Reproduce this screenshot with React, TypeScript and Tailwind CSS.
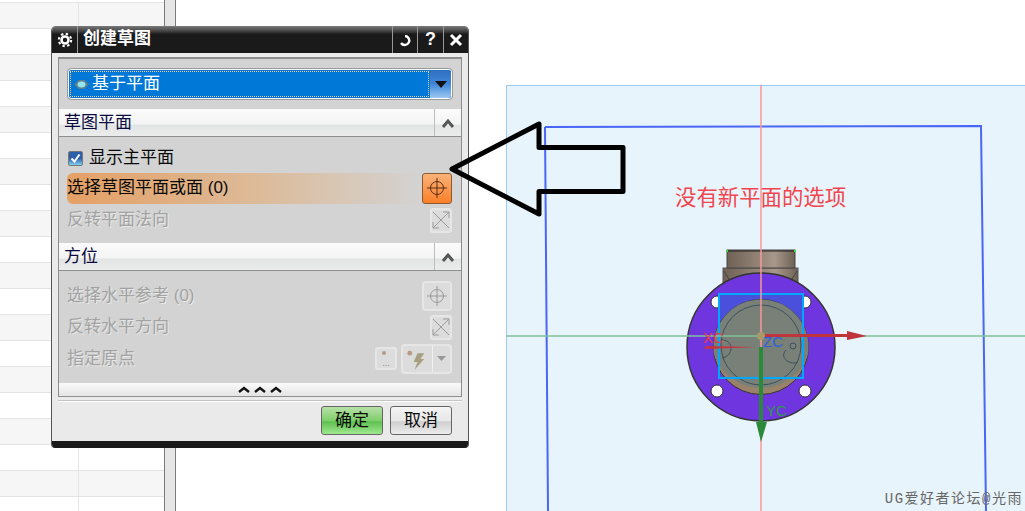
const cjk = "font-['Liberation_Sans','Noto_Sans_CJK_SC',sans-serif]";

function Crosshair({ color }: { color: string }) {
  return (
    <svg width="22" height="22" viewBox="0 0 22 22" fill="none" stroke={color} strokeWidth="1">
      <circle cx="11" cy="11" r="6.500" />
      <path d="M11 1v20M1 11h20" />
    </svg>
  );
}

function FlipIcon() {
  return (
    <div className="flex h-[25px] w-[22px] items-center justify-center rounded-[3px] border-2 border-[#e6e6e6] bg-[#dcdcdc]">
      <svg width="18" height="20" viewBox="0 0 18 20" fill="none" stroke="#9a9a9a" strokeWidth="1">
        <path d="M1 2l16 16M17 2L1 18M11 2h6v6M1 12v6h6" />
      </svg>
    </div>
  );
}

function SectionHeader({ title }: { title: string }) {
  return (
    <div className="flex h-[28px] border-b border-[#8e8e8e] bg-[linear-gradient(#fbfbfb_0%,#f4f4f4_55%,#e2e4e4_60%,#ececec_100%)]">
      <div className="flex-1 pl-[5px] text-[17px] leading-[27px] text-[#0a0a40]">{title}</div>
      <div className="flex w-[27px] items-center justify-center border-l border-[#bdbdbd]">
        <svg width="14" height="10" viewBox="0 0 14 10" fill="none" stroke="#555" strokeWidth="3">
          <path d="M2 9l5-6 5 6" />
        </svg>
      </div>
    </div>
  );
}

function Row({ text, height, children }: { text: string; height: string; children: React.ReactNode }) {
  return (
    <div className={`flex items-center justify-between pl-[8px] pr-[9px] ${height}`}>
      <span className="text-[17px] text-[#a2a2a2] [text-shadow:1px_1px_0_#e8e8e8]">{text}</span>
      {children}
    </div>
  );
}

function Dialog() {
  return (
    <div className={`absolute left-[51px] top-[26px] flex h-[422px] w-[418px] flex-col overflow-hidden rounded-t-[5px] rounded-b-[4px] border-x border-[#555] bg-[#eaeaea] ${cjk}`}>
      <div className="flex h-[27px] shrink-0 items-stretch bg-[linear-gradient(#7a7a7a_0%,#3a3a3a_22%,#1a1a1a_30%,#1a1a1a_100%)] text-white">
        <div className="flex w-[26px] items-center justify-center border-r border-[#999]">
          <svg width="16" height="16" viewBox="0 0 16 16" fill="none" stroke="#fff">
            <circle cx="8" cy="8" r="3.500" strokeWidth="2.600" />
            <circle cx="8" cy="8" r="6.200" strokeWidth="2" strokeDasharray="2.400 2.470" />
          </svg>
        </div>
        <div className="flex-1 pl-[5px] text-[17px] font-bold leading-[26px]">创建草图</div>
        <div className="flex w-[25px] items-center justify-center border-l border-[#999]">
          <svg width="14" height="14" viewBox="0 0 14 14" fill="none" stroke="#fff" strokeWidth="2.400">
            <path d="M7 3a4.500 4.500 0 1 1-4 7" />
          </svg>
        </div>
        <div className="flex w-[26px] items-center justify-center border-l border-[#999] text-[18px] font-bold">?</div>
        <div className="flex w-[25px] items-center justify-center border-l border-[#999]">
          <svg width="14" height="14" viewBox="0 0 14 14" stroke="#fff" strokeWidth="3">
            <path d="M2 2l10 10M12 2L2 12" />
          </svg>
        </div>
      </div>

      <div className="mx-[6px] mt-[4px] border-x border-t-2 border-b border-[#8e8e8e] bg-[#d3d3d3]">
        <div className="flex h-[50px] items-center pl-[9px] pr-[9px]">
          <div className="flex h-[30px] w-full rounded-[3px] border border-white bg-[#0078d7] outline outline-[#9a9a9a]">
            <div className="m-px flex flex-1 items-center gap-[3px] border border-dotted border-[#f4c98a] pl-[3px] text-[17px] text-white">
              <svg width="15" height="11" viewBox="0 0 15 11">
                <path d="M0 5.500l4.500-4.500h6l4.500 4.500-4.500 4.500h-6z" fill="#5e7f8c" />
                <ellipse cx="7.500" cy="5.500" rx="4" ry="3" fill="#8fe6ef" />
              </svg>
              基于平面
            </div>
            <div className="flex w-[21px] items-center justify-center rounded-r-[3px] bg-[linear-gradient(#2f6fc0,#3f86d8_50%,#9cc8f2)]">
              <svg width="12" height="7" viewBox="0 0 12 7">
                <path d="M0 0h12L6 7z" fill="#111" />
              </svg>
            </div>
          </div>
        </div>

        <SectionHeader title="草图平面" />
        <div className="h-[106px] pt-[8px]">
          <div className="mb-[1px] flex h-[26px] items-center pl-[9px]">
            <span className="flex h-[15px] w-[15px] items-center justify-center rounded-[2px] border border-[#777] bg-[linear-gradient(#2f5fa8_50%,#7fd2f0)]">
              <svg width="11" height="11" viewBox="0 0 11 11" fill="none" stroke="#fff" strokeWidth="2">
                <path d="M1.500 5.500l3 3 5-7" />
              </svg>
            </span>
            <span className="ml-[6px] text-[17px] text-[#0a0a0a]">显示主平面</span>
          </div>
          <div className="flex h-[32px] items-center pr-[9px] pl-[8px]">
            <div className="flex h-[31px] flex-1 items-center rounded-l-[6px] bg-[linear-gradient(90deg,#e5a065,#dcbb9a_55%,#d3d3d3)] text-[17px] text-[#0a0a0a]">
              选择草图平面或面 (0)
            </div>
            <div className="flex h-[31px] w-[30px] items-center justify-center rounded-[3px] border border-[#8a5a30] bg-[linear-gradient(#f9b27a,#fb7f28)]">
              <Crosshair color="#5a2c10" />
            </div>
          </div>
          <Row text="反转平面法向" height="h-[32px]"><FlipIcon /></Row>
        </div>

        <SectionHeader title="方位" />
        <div className="h-[112px] pt-[8px]">
          <Row text="选择水平参考 (0)" height="h-[33px]">
            <div className="flex h-[30px] w-[30px] items-center justify-center rounded-[4px] border-2 border-[#e6e6e6] bg-[#dcdcdc]">
              <Crosshair color="#9a9a9a" />
            </div>
          </Row>
          <Row text="反转水平方向" height="h-[30px]"><FlipIcon /></Row>
          <Row text="指定原点" height="h-[33px]">
            <div className="flex items-center gap-[4px]">
              <div className="flex h-[23px] w-[22px] flex-col items-center justify-around rounded-[3px] border-2 border-[#e6e6e6] bg-[#dcdcdc]">
                <span className="mr-[4px] h-[4px] w-[4px] rounded-full bg-[#b89a88]" />
                <span className="text-[9px] leading-[6px] text-[#888]">...</span>
              </div>
              <div className="flex h-[30px] w-[51px] rounded-[4px] border-2 border-[#e6e6e6] bg-[#dcdcdc]">
                <svg className="flex-1" viewBox="0 0 30 26">
                  <circle cx="7" cy="7" r="2.500" fill="#b89a88" />
                  <path d="M22 7h-7l-4 9h4l-3 8 10-11h-4z" fill="#a89f80" />
                </svg>
                <div className="flex w-[18px] items-center justify-center border-l border-[#f0f0f0]">
                  <svg width="9" height="5" viewBox="0 0 9 5"><path d="M0 0h9L4.500 5z" fill="#999" /></svg>
                </div>
              </div>
            </div>
          </Row>
        </div>

        <div className="flex h-[13px] items-center justify-center gap-[4px] bg-[linear-gradient(#fafafa,#e4e4e4)]">
          {[0, 1, 2].map((i) => (
            <svg key={i} width="12" height="7" viewBox="0 0 12 7" fill="none" stroke="#111" strokeWidth="2.400">
              <path d="M1 6l5-4 5 4" />
            </svg>
          ))}
        </div>
      </div>

      <div className="mx-[6px] mt-[3px] border-t border-[#c4c4c4] shadow-[0_1px_0_#fff]" />
      <div className="flex flex-1 justify-end gap-[7px] pr-[16px] pt-[5px]">
        <div className="flex h-[29px] w-[62px] items-center justify-center rounded-[3px] border border-[#666] bg-[linear-gradient(#b8e0a8,#7fcf6c_50%,#60c050_55%,#a0e890)] text-[17px] text-[#0a0a0a]">确定</div>
        <div className="flex h-[29px] w-[62px] items-center justify-center rounded-[3px] border border-[#666] bg-[linear-gradient(#f4f4f4,#e8e8e8_50%,#cfcfcf_55%,#ececec)] text-[17px] text-[#0a0a0a]">取消</div>
      </div>
      <div className="h-[7px] shrink-0 bg-[#1a1a1a]" />
    </div>
  );
}

function Model() {
  return (
    <svg className="absolute left-[-1px] top-[-1px]" width="520" height="427" viewBox="506 85 520 427" fill="none">
      <defs>
        <linearGradient id="flange" x1="0" x2="1" y1="0" y2="0">
          <stop offset="0" stopColor="#6e6254" />
          <stop offset="0.3" stopColor="#85776a" />
          <stop offset="0.7" stopColor="#a8978a" />
          <stop offset="1" stopColor="#6e6254" />
        </linearGradient>
        <clipPath id="cover">
          <circle cx="761" cy="347" r="47.500" />
        </clipPath>
      </defs>
      <path d="M545 127L981 126L986 511M545 127L548 511" stroke="#4a66f5" strokeWidth="2" />
      <rect x="723" y="268" width="75" height="18" fill="url(#flange)" stroke="#555" />
      <path d="M724 271l8 13M797 271l-8 13" stroke="#444" />
      <rect x="727" y="250" width="68" height="18" fill="url(#flange)" stroke="#444" />
      <path d="M727 251h68" stroke="#222" />
      <rect x="726" y="250" width="2" height="2" fill="#3ddc3d" />
      <rect x="794" y="250" width="2" height="2" fill="#3ddc3d" />
      <circle cx="761" cy="347" r="74" fill="#6f36e0" stroke="#333" strokeWidth="1.500" />
      {[[717, 302], [805, 302], [717, 391], [805, 391]].map(([cx, cy]) => (
        <circle key={cx + "-" + cy} cx={cx} cy={cy} r="6" fill="#fff" stroke="#333" />
      ))}
      <rect x="719" y="294" width="84" height="84" fill="#4a50dc" />
      <circle cx="761" cy="347" r="47.500" fill="#9a826a" stroke="#333" />
      <circle cx="761" cy="338" r="50" fill="#788078" clipPath="url(#cover)" />
      <circle cx="761" cy="345" r="40" stroke="#3c5060" />
      <circle cx="793" cy="346" r="3" stroke="#3c5060" />
      <path d="M722 340c12 0 12 16 0 18M786 350c-8 8 6 16 12 12" stroke="#3c5060" />
      <rect x="719" y="294" width="84" height="84" stroke="#00a8ff" strokeWidth="2" />
      <path d="M506 336H1025" stroke="#7fc29b" strokeWidth="1.500" />
      <path d="M761 85V511" stroke="#f79a9a" strokeWidth="1.500" />
      <path d="M705 346l52 1-52 2z" fill="#c8323c" />
      <path d="M763 334h84v-3l20 5-20 4v-3h-84z" fill="#c0353c" />
      <path d="M759 347h4v75h4l-6 20-5-20h3z" fill="#2a8a3a" />
      <circle cx="761" cy="336" r="4" fill="#a89a68" />
      <text x="703" y="343" fontSize="15" fill="#e03c48" fontFamily="Liberation Sans">XC</text>
      <text x="763" y="347" fontSize="15" fill="#2c60e0" fontFamily="Liberation Sans">ZC</text>
      <text x="766" y="416" fontSize="15" fill="#2f9a40" fontFamily="Liberation Sans">YC</text>
    </svg>
  );
}

export default function App() {
  const rows = Array.from({ length: 20 }, (_, i) => i);
  return (
    <div className={`relative flex h-[511px] w-[1025px] overflow-hidden bg-white ${cjk}`}>
      <div className="w-[164px] shrink-0 bg-white">
        <div className="h-[3px] border-b border-[#e4e4e4]" />
        {rows.map((i) => (
          <div key={i} className={`flex h-[26px] border-b border-[#e4e4e4] ${i % 2 === 0 ? "bg-[#f6f6f7]" : "bg-white"}`}>
            <div className="w-[79px] border-r border-[#e4e4e4]" />
          </div>
        ))}
      </div>
      <div className="w-[12px] shrink-0 border-x border-[#7a7a7a] bg-[#e6e6e6]" />
      <div className="flex-1 pl-[330px] pt-[85px]">
        <div className="relative h-full border-l border-t border-[#9ccdf0] bg-[#e8f4fb]">
          <Model />
          <div className="absolute left-[168px] top-[99px] text-[21.400px] leading-[26px] text-[#f0444f]">没有新平面的选项</div>
          <div className="absolute bottom-[3px] right-[2px] font-['Liberation_Mono','Noto_Sans_CJK_SC',monospace] text-[14px] leading-[18px] tracking-[1.500px] text-[#666]">UG爱好者论坛@光雨</div>
        </div>
      </div>
      <Dialog />
      <svg className="absolute left-[445px] top-[116px]" width="186" height="106" viewBox="445 116 186 106" fill="none">
        <path d="M452 169L539 124V147.500H623V191.500H539V214Z" stroke="#000" strokeWidth="5" strokeLinejoin="round" />
      </svg>
    </div>
  );
}
